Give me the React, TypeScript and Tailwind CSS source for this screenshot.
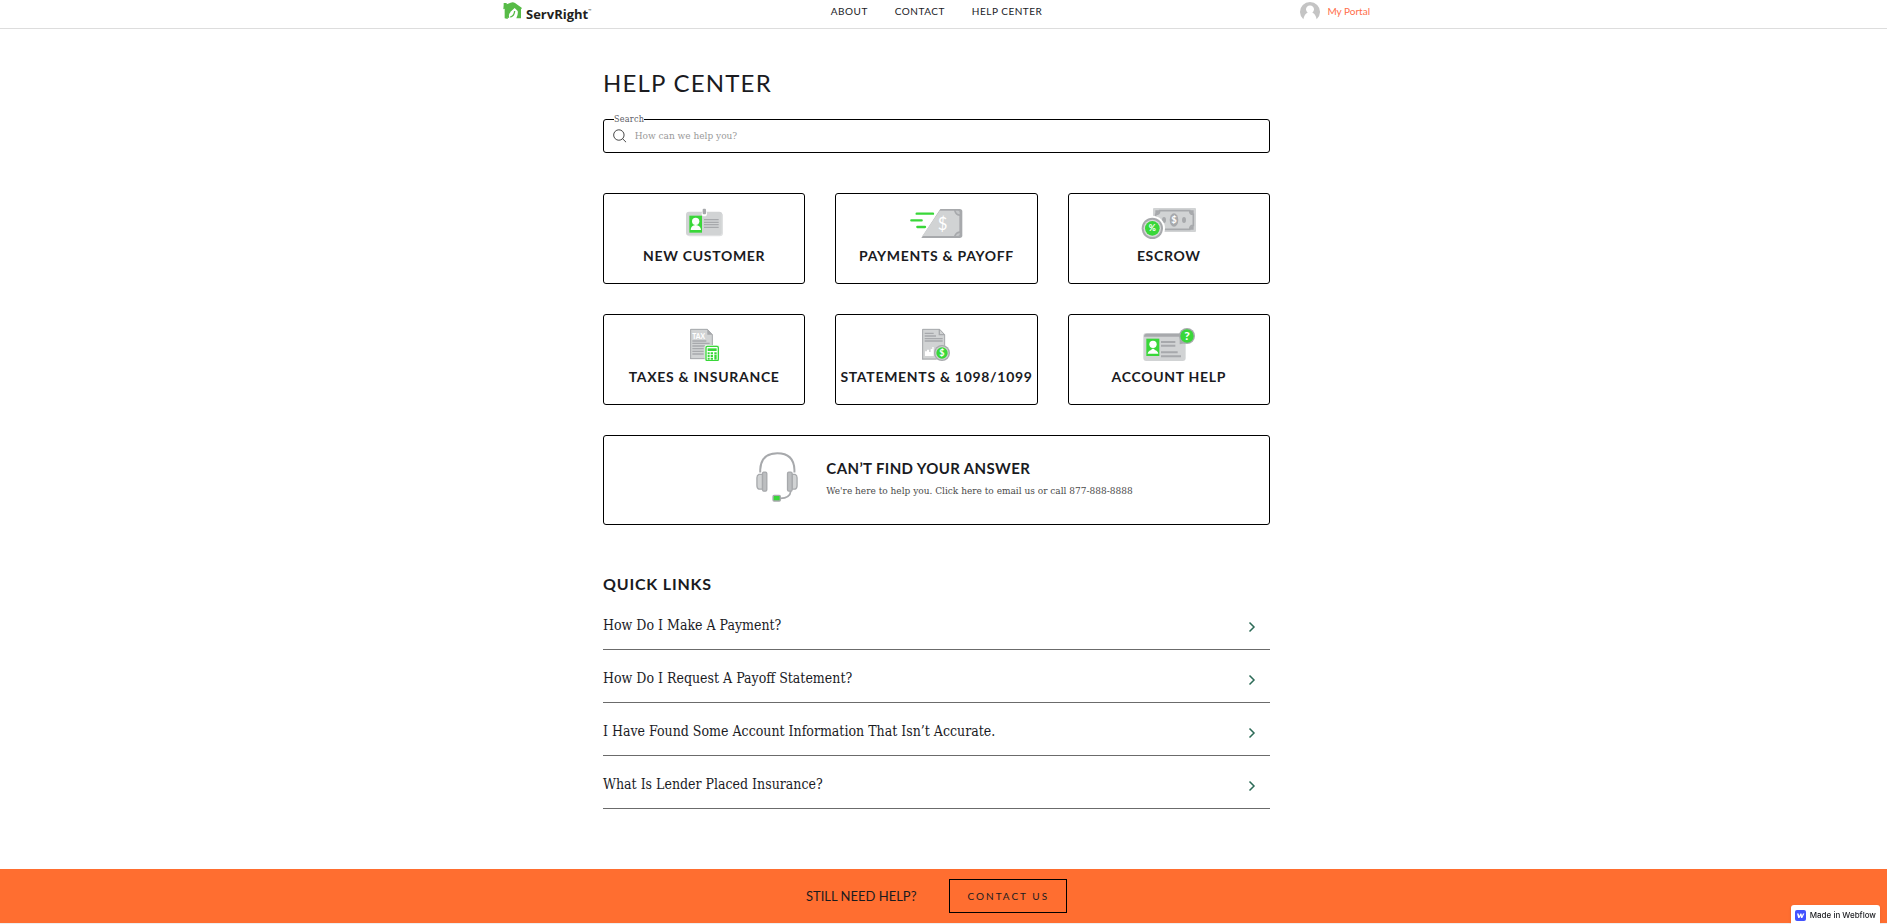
import type { ReactNode } from 'react';

interface Topic {
  label: string;
  href: string;
  viewBox: string;
  art: ReactNode;
}

const navLinks = [
  { label: 'ABOUT', href: '#about' },
  { label: 'CONTACT', href: '#contact' },
  { label: 'HELP CENTER', href: '#help' },
];

const quickLinks = [
  'How Do I Make A Payment?',
  'How Do I Request A Payoff Statement?',
  'I Have Found Some Account Information That Isn’t Accurate.',
  'What Is Lender Placed Insurance?',
];

const topics: Topic[] = [
  {
    label: 'NEW CUSTOMER',
    href: '#new-customer',
    viewBox: '228 63 198 102',
    art: (
      <>
        <rect x="273" y="80" width="109" height="72" rx="9" fill="#d1d3d4" />
        <path d="M382 88v56q0 8-8 8H281" fill="none" stroke="#dfe0e1" strokeWidth="4" />
        <circle cx="328" cy="86" r="8" fill="#fff" />
        <rect x="323" y="71" width="10" height="17" rx="3" fill="#a7a9ac" />
        <rect x="283" y="92" width="38" height="51" fill="#39d739" />
        <circle cx="302" cy="109" r="11" fill="#fff" />
        <path d="M287 135q0-14 15-15 15 1 16 15z" fill="#fff" />
        <path d="M327 104h44M327 112h44M327 119h44M327 127h44" stroke="#a7a9ac" strokeWidth="4" />
      </>
    ),
  },
  {
    label: 'PAYMENTS & PAYOFF',
    href: '#payments',
    viewBox: '235 63 198 102',
    art: (
      <>
        <path d="M347 72h58q8 0 8 8v71q0 8-8 8H290z" fill="#a7a9ac" />
        <path d="M345 77h43q4 14 16 16v46q-12 2-16 14h-95z" fill="#d1d3d4" />
        <path d="M393 77q2 9 12 11v-6q0-5-5-5zM405 144q-10 2-12 9h7q5 0 5-5z" fill="#c4c6c8" />
        <path d="M276 86h49M260 106h31M278 126h23" stroke="#39d739" strokeWidth="7" strokeLinecap="round" />
        <text x="354" y="134" textAnchor="middle" fontSize="50" fill="#fff" className="font-['Lato',sans-serif]">$</text>
      </>
    ),
  },
  {
    label: 'ESCROW',
    href: '#escrow',
    viewBox: '228 63 198 102',
    art: (
      <>
        <rect x="279" y="69" width="129" height="72" rx="3" fill="#d1d3d4" />
        <path d="M299 77h90q0 11 11 11v33q-11 0-11 12h-90q0-12-12-12V88q12 0 12-11z" fill="none" stroke="#a7a9ac" strokeWidth="5" />
        <path d="M286 76h12q0 11-12 12zM401 76h-12q0 11 12 12zM401 134h-12q0-11 12-12z" fill="#a7a9ac" />
        <ellipse cx="342" cy="105" rx="13" ry="20" fill="#a7a9ac" />
        <ellipse cx="312" cy="105" rx="6" ry="9" fill="#a7a9ac" />
        <ellipse cx="372" cy="105" rx="6" ry="9" fill="#a7a9ac" />
        <text x="342" y="115" textAnchor="middle" fontSize="28" fill="#fff" className="font-['Lato',sans-serif] font-bold">$</text>
        <circle cx="277" cy="130" r="38" fill="#fff" />
        <circle cx="277" cy="130" r="32" fill="#a7a9ac" />
        <circle cx="277" cy="130" r="26" fill="#d9dadb" />
        <circle cx="277" cy="130" r="22" fill="#39d739" />
        <text x="277" y="139" textAnchor="middle" fontSize="26" fill="#fff" className="font-['Lato',sans-serif] font-bold">%</text>
      </>
    ),
  },
  {
    label: 'TAXES & INSURANCE',
    href: '#taxes',
    viewBox: '228 66 198 102',
    art: (
      <>
        <path d="M285 72h52l16 17v73h-68z" fill="#d1d3d4" />
        <path d="M287 162V73h50l15 16v34M286 161h45" fill="none" stroke="#a7a9ac" strokeWidth="3" />
        <path d="M337 72v17h16z" fill="#a7a9ac" />
        <text x="311" y="101" textAnchor="middle" fontSize="20" fill="#fff" className="font-['Lato',sans-serif] font-black">TAX</text>
        <path d="M292 108h42M292 115h52M292 123h38M292 131h34M292 139h34M292 147h34" stroke="#a7a9ac" strokeWidth="4" />
        <rect x="329" y="120" width="44" height="48" rx="4" fill="#e9f8e9" />
        <rect x="333" y="124" width="37" height="43" rx="4" fill="#fff" stroke="#39d739" strokeWidth="4" />
        <rect x="338" y="130" width="27" height="8" fill="#39d739" />
        <path d="M338 145h6M347 145h7M358 145h7M338 153h6M347 153h7M338 161h6M347 161h7" stroke="#39d739" strokeWidth="6" />
        <rect x="358" y="149" width="7" height="15" fill="#39d739" />
      </>
    ),
  },
  {
    label: 'STATEMENTS & 1098/1099',
    href: '#statements',
    viewBox: '235 66 198 102',
    art: (
      <>
        <path d="M292 72h53l16 17v75h-69z" fill="#d1d3d4" />
        <path d="M294 163V73h51l15 16v33M293 162h42" fill="none" stroke="#a7a9ac" strokeWidth="3" />
        <path d="M344 73v16h16" fill="none" stroke="#a7a9ac" strokeWidth="4" />
        <path d="M300 85h27M300 93h34M300 101h54M300 108h54" stroke="#a7a9ac" strokeWidth="4" />
        <path d="M301 153v-14h6v-5h6v7h5v-9h5v-6h4v27z" fill="#fff" />
        <circle cx="352" cy="144" r="24" fill="#a7a9ac" />
        <circle cx="352" cy="144" r="20" fill="#d1d3d4" />
        <circle cx="352" cy="144" r="17" fill="#39d739" />
        <text x="352" y="154" textAnchor="middle" fontSize="27" fill="#fff" className="font-['Lato',sans-serif] font-bold">$</text>
      </>
    ),
  },
  {
    label: 'ACCOUNT HELP',
    href: '#account',
    viewBox: '228 66 198 102',
    art: (
      <>
        <rect x="250" y="84" width="127" height="84" rx="9" fill="#d1d3d4" />
        <path d="M252 95q0-9 9-9h100v9z" fill="#a7a9ac" />
        <rect x="259" y="101" width="39" height="52" fill="#39d739" />
        <circle cx="279" cy="118" r="11" fill="#fff" />
        <path d="M263 146q1-8 11-11 0-4 5-4t5 4q10 3 11 11z" fill="#fff" />
        <path d="M303 111h43M303 122h43M303 142h50M303 154h60" stroke="#a7a9ac" strokeWidth="6" />
        <path d="M359 102v16l17-3z" fill="#a7a9ac" />
        <circle cx="381" cy="93" r="24" fill="#a7a9ac" />
        <circle cx="381" cy="93" r="20" fill="#39d739" />
        <text x="381" y="105" textAnchor="middle" fontSize="36" fill="#fff" className="font-['Lato',sans-serif] font-black">?</text>
      </>
    ),
  },
];

function Logo() {
  return (
    <a href="#home" className="flex items-start text-[#231f20]">
      <svg viewBox="0 0 60 51" className="mt-px h-[17px] w-5" aria-hidden="true">
        <path d="M2 9V3h9v4l12-5q7-3 13 1l21 15-3 4v27H40q6-12 4-22l-9-9-19 17-2 16-9-2V20l-4 2z" fill="#57bb47" />
        <path d="M22 45q12-3 13-18M17 47q-4-11 4-17" fill="none" stroke="#57bb47" strokeWidth="4" />
      </svg>
      <span className="mt-1 ml-[3px] font-['Open_Sans',sans-serif] text-[13px] leading-[18px] font-bold">ServRight</span>
      <span className="mt-1 font-['Open_Sans',sans-serif] text-[4px] leading-3">™</span>
    </a>
  );
}

function Header() {
  return (
    <header className="border-b border-[#dddddd] pr-[14px] font-['Lato',sans-serif]">
      <div className="mx-auto flex w-full max-w-[867px] items-start justify-between pt-px pb-[5px]">
        <div className="flex flex-1">
          <Logo />
        </div>
        <nav className="flex gap-[27px] text-[10px] leading-5 tracking-wider text-[#1a1b1f]">
          {navLinks.map((link) => (
            <a key={link.label} href={link.href}>
              {link.label}
            </a>
          ))}
        </nav>
        <div className="flex flex-1 justify-end">
          <a href="#portal" className="flex items-center gap-[7px] text-[10px] leading-5 text-[#ff6e4a]">
            <svg viewBox="0 0 60 60" className="size-5" aria-hidden="true">
              <path d="M10 55A30 30 0 1 1 50 55Q47 38 37 35a12 12 0 1 0-14 0Q13 38 10 55z" fill="#c4c4c4" />
            </svg>
            My Portal
          </a>
        </div>
      </div>
    </header>
  );
}

function SearchBox() {
  return (
    <div className="relative mt-5">
      <label
        htmlFor="search"
        className="absolute -top-[7px] left-[11px] bg-white font-['DejaVu_Serif_Condensed','DejaVu_Serif',serif] text-[9px] leading-[14px] tracking-wide text-[#5b5b66]"
      >
        Search
      </label>
      <div className="flex items-center rounded-[3px] border border-black pl-[9px]">
        <svg viewBox="0 0 42 42" className="size-[14px]" fill="none" stroke="#444" strokeWidth="3" aria-hidden="true">
          <circle cx="18" cy="18" r="16" />
          <path d="M29 29l11 11" />
        </svg>
        <input
          id="search"
          type="search"
          placeholder="How can we help you?"
          className="w-full bg-transparent px-2 py-2 font-['DejaVu_Serif_Condensed','DejaVu_Serif',serif] text-[10px] leading-4 outline-none placeholder:text-[#999999]"
        />
      </div>
    </div>
  );
}

function Headset() {
  return (
    <svg viewBox="78 64 126 152" className="h-[50px] w-[42px]" fill="none" aria-hidden="true">
      <path d="M90 126v-8q2-50 52-50t52 50v8" stroke="#a7a9ac" strokeWidth="6" />
      <path d="M183 182q-2 22-32 23" stroke="#a7a9ac" strokeWidth="5" />
      <g fill="#d1d3d4" stroke="#a7a9ac" strokeWidth="4">
        <path d="M97 132H86q-6 2-6 10v24q0 9 6 11h11zM187 132h9q6 2 6 10v24q0 9-6 11h-9z" />
        <rect x="97" y="125" width="13" height="58" rx="4" fill="#bcbec0" />
        <rect x="173" y="125" width="14" height="58" rx="4" fill="#bcbec0" />
      </g>
      <rect x="129" y="196" width="22" height="17" rx="3" fill="#39d739" stroke="#a7a9ac" strokeWidth="4" />
    </svg>
  );
}

export default function App() {
  return (
    <div className="min-h-screen bg-white text-[#1a1b1f]">
      <Header />
      <main className="pr-[14px]">
        <div className="mx-auto w-full max-w-[667px]">
          <h1 className="pt-[38px] font-['Lato',sans-serif] text-[24px] leading-8 tracking-wider">HELP CENTER</h1>
          <SearchBox />

          <section className="mt-10 grid grid-cols-3 gap-[30px] font-['Lato',sans-serif]">
            {topics.map((topic) => (
              <a
                key={topic.label}
                href={topic.href}
                className="flex flex-col items-center rounded-[3px] border border-black pt-3 pb-[17px]"
              >
                <svg viewBox={topic.viewBox} className="h-[34px] w-[66px]" aria-hidden="true">
                  {topic.art}
                </svg>
                <span className="mt-[6px] text-[14px] leading-5 font-bold tracking-wider whitespace-nowrap">{topic.label}</span>
              </a>
            ))}
            <a
              href="#email"
              className="col-span-3 flex items-start justify-center gap-7 rounded-[3px] border border-black pt-4 pb-[22px] pl-4"
            >
              <Headset />
              <span className="flex flex-col gap-[5px] pt-[6px]">
                <span className="text-[15px] leading-5 font-bold tracking-wide">CAN’T FIND YOUR ANSWER</span>
                <span className="font-['DejaVu_Serif_Condensed','DejaVu_Serif',serif] text-[10px] leading-4 text-[#4a4a4a]">
                  We're here to help you. Click here to email us or call 877-888-8888
                </span>
              </span>
            </a>
          </section>

          <section className="mt-[49px] pb-[60px]">
            <h2 className="font-['Lato',sans-serif] text-[16px] leading-5 font-bold tracking-wider">QUICK LINKS</h2>
            <ul className="mt-[3px]">
              {quickLinks.map((title) => (
                <li key={title}>
                  <a
                    href="#faq"
                    className="flex items-center justify-between border-b border-[#6b6b6b] pt-[18px] pr-[14px] pb-[14px] font-['DejaVu_Serif_Condensed','DejaVu_Serif',serif] text-[14px] leading-5"
                  >
                    {title}
                    <svg viewBox="0 0 8 12" className="mt-1 h-3 w-2" fill="none" stroke="#2c6b57" strokeWidth="1.5" aria-hidden="true">
                      <path d="M1.5 1.5L6 6l-4.500 4.500" />
                    </svg>
                  </a>
                </li>
              ))}
            </ul>
          </section>
        </div>
      </main>

      <footer className="border-b-2 border-[#eeeeee] bg-[#ff6e30] pr-[14px] font-['Lato',sans-serif]">
        <div className="flex items-center justify-center gap-[33px] py-[10px]">
          <p className="text-[13px] leading-4">STILL NEED HELP?</p>
          <button type="button" className="border border-black px-[17px] py-2 text-[10px] leading-4 tracking-[2px]">
            CONTACT US
          </button>
        </div>
      </footer>

      <a
        href="#webflow"
        className="fixed right-[7px] bottom-0 flex items-center gap-1 rounded-t-[3px] bg-white px-1 pt-1 pb-0.5 font-['Inter',sans-serif] text-[8px] leading-[13px] font-medium text-[#1a1b1f] shadow"
      >
        <svg viewBox="0 0 11 11" className="size-[11px]" aria-hidden="true">
          <rect width="11" height="11" rx="2" fill="#4353ff" />
          <path d="M2 3.500h1.600l.6 2.600 1.100-2.600h1.200l.5 2.600.9-2.600H9.400L7.300 8H6l-.5-2.300L4.500 8H3.200z" fill="#fff" />
        </svg>
        Made in Webflow
      </a>
    </div>
  );
}
